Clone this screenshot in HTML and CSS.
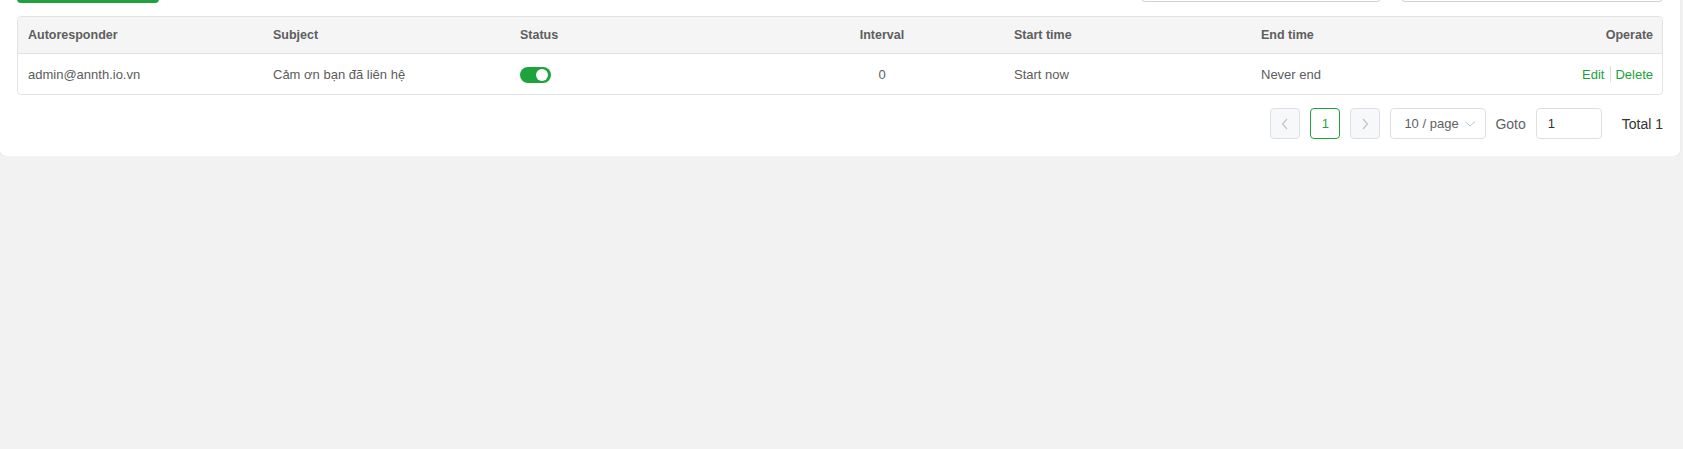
FILE: index.html
```html
<!DOCTYPE html>
<html>
<head>
<meta charset="utf-8">
<link rel="stylesheet" href="styles.css">
</head>
<body>
<div class="page">
  <div class="card">
    <div class="toolbar">
      <div class="btn-primary"></div>
      <div class="filters">
        <div class="filter filter-a"></div>
        <div class="filter filter-b"></div>
      </div>
    </div>
    <div class="table">
      <div class="tr thead">
        <div class="td">Autoresponder</div>
        <div class="td">Subject</div>
        <div class="td">Status</div>
        <div class="td center">Interval</div>
        <div class="td">Start time</div>
        <div class="td">End time</div>
        <div class="td right">Operate</div>
      </div>
      <div class="tr tbody">
        <div class="td">admin@annth.io.vn</div>
        <div class="td">Cảm ơn bạn đã liên hệ</div>
        <div class="td"><span class="switch"><span class="knob"></span></span></div>
        <div class="td center">0</div>
        <div class="td">Start now</div>
        <div class="td">Never end</div>
        <div class="td right ops"><a class="link">Edit</a><span class="sep"></span><a class="link">Delete</a></div>
      </div>
    </div>
    <div class="pagination">
      <span class="pbtn disabled"><svg width="12" height="14" viewBox="0 0 12 14"><path d="M8 2 L3.5 7 L8 12" fill="none" stroke="#c0c4cc" stroke-width="1.2"/></svg></span>
      <span class="pbtn active">1</span>
      <span class="pbtn disabled"><svg width="12" height="14" viewBox="0 0 12 14"><path d="M4 2 L8.5 7 L4 12" fill="none" stroke="#c0c4cc" stroke-width="1.2"/></svg></span>
      <span class="psize">10 / page<svg class="chev" width="12" height="8" viewBox="0 0 12 8"><path d="M1 1.5 L6 6 L11 1.5" fill="none" stroke="#c0c4cc" stroke-width="1"/></svg></span>
      <span class="goto">Goto</span>
      <span class="pinput">1</span>
      <span class="total">Total 1</span>
    </div>
  </div>
</div>
</body>
</html>
```
FILE: styles.css
```css
html, body {
  margin: 0;
  padding: 0;
  background: #f2f2f2;
  font-family: "Liberation Sans", Arial, sans-serif;
}
.page {
  padding-right: 3px;
}
.card {
  background: #ffffff;
  border-radius: 0 0 6px 6px;
  box-shadow: 0 1px 2px rgba(0,0,0,0.08);
  padding: 0 17px 17px 17px;
}
.toolbar {
  display: flex;
  justify-content: space-between;
  margin-top: -29px;
  height: 32px;
}
.btn-primary {
  width: 142px;
  height: 32px;
  background: #1ea33c;
  border-radius: 4px;
}
.filters {
  display: flex;
  gap: 20px;
}
.filter {
  height: 31px;
  border: 1px solid #d0d0d0;
  border-radius: 4px;
  box-sizing: border-box;
}
.filter-a { width: 240px; }
.filter-b { width: 262px; }
.table {
  margin-top: 13px;
  border: 1px solid #e3e3e3;
  border-radius: 4px;
  overflow: hidden;
}
.tr {
  display: grid;
  grid-template-columns: 245px 247px 249px 245px 247px 247px 1fr;
  align-items: center;
}
.thead {
  height: 36px;
  background: #f5f5f5;
  border-bottom: 1px solid #e3e3e3;
  color: #5e5e5e;
  font-size: 12.5px;
  font-weight: bold;
}
.tbody {
  height: 40px;
  color: #5c5c5c;
  font-size: 13px;
}
.td {
  padding: 0 9px 0 10px;
  white-space: nowrap;
}
.center { text-align: center; }
.right { text-align: right; }
.switch {
  display: inline-flex;
  width: 31px;
  height: 16px;
  border-radius: 8px;
  background: #1ea33c;
  align-items: center;
  justify-content: flex-end;
  box-sizing: border-box;
  padding-right: 3px;
  vertical-align: middle;
  margin-top: 2px;
}
.knob {
  width: 12px;
  height: 12px;
  border-radius: 50%;
  background: #ffffff;
}
.ops {
  display: flex;
  justify-content: flex-end;
  align-items: center;
}
.link {
  color: #18a33a;
  cursor: pointer;
}
.sep {
  display: inline-block;
  width: 1px;
  height: 16px;
  background: #dddddd;
  margin: 0 4px 0 6px;
}
.pagination {
  margin-top: 13px;
  display: flex;
  justify-content: flex-end;
  align-items: center;
  height: 31px;
}
.pbtn {
  width: 30px;
  height: 31px;
  box-sizing: border-box;
  border: 1px solid #dcdfe6;
  border-radius: 4px;
  display: flex;
  align-items: center;
  justify-content: center;
  margin-right: 10px;
  font-size: 13px;
  color: #1ea33c;
}
.pbtn.disabled {
  background: #f7f8fa;
}
.pbtn.active {
  border-color: #1ea33c;
}
.psize {
  width: 96px;
  height: 31px;
  box-sizing: border-box;
  border: 1px solid #dcdfe6;
  border-radius: 4px;
  display: flex;
  align-items: center;
  padding-left: 13px;
  font-size: 13px;
  color: #606266;
}
.chev {
  margin-left: 5px;
}
.goto {
  margin-left: 9px;
  font-size: 14px;
  color: #606266;
}
.pinput {
  margin-left: 10px;
  width: 66px;
  height: 31px;
  box-sizing: border-box;
  border: 1px solid #dcdfe6;
  border-radius: 4px;
  display: flex;
  align-items: center;
  padding-left: 11px;
  font-size: 13px;
  color: #333333;
}
.total {
  margin-left: 20px;
  font-size: 14px;
  color: #333333;
}
```
